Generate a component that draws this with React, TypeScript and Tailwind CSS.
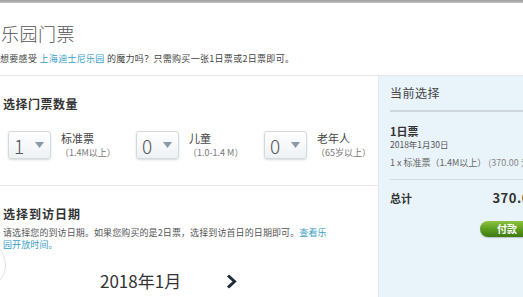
import React from 'react';

const font = { fontFamily: '"Noto Sans CJK SC", "Noto Sans", sans-serif' };

interface TicketSelectProps {
  value: string;
  label: string;
  note: string;
}

const TicketSelect: React.FC<TicketSelectProps> = ({ value, label, note }) => (
  <div className="flex items-start w-[128px] shrink-0">
    <div className="flex items-center justify-between w-[43px] h-[28px] pl-[5px] pr-[6px] rounded-[3px] border border-[#d4d9dd] bg-gradient-to-b from-white to-[#eef2f5] shadow-[0_1px_2px_rgba(0,0,0,0.15)]">
      <span className="text-[19px] font-light leading-none text-[#555]">{value}</span>
      <svg width="9" height="6" viewBox="0 0 9 6">
        <path d="M0 0 H9 L4.5 6 Z" fill="#8d9aa6" />
      </svg>
    </div>
    <div className="ml-[10px] flex flex-col">
      <span className="text-[11px] leading-[14px] text-[#444]">{label}</span>
      <span className="mt-[2px] text-[9px] leading-[11px] text-[#777] -ml-[1px]">{note}</span>
    </div>
  </div>
);

export default function App() {
  return (
    <div style={font} className="relative w-[523px] h-[297px] overflow-hidden bg-white">
      <div className="h-[3px] bg-gradient-to-b from-[#9c9c9c] to-[#c4c4c4]" />

      {/* header */}
      <div className="h-[73px] border-b border-[#e6e8ea] pl-[1px] pt-[18px]">
        <h1 className="text-[18px] leading-[24px] font-light text-[#555] tracking-[0.5px]">乐园门票</h1>
        <p className="mt-[8px] text-[9px] leading-[12px] text-[#444] -ml-[1px] tracking-[0.3px]">
          想要感受 <span className="text-[#3aa0c8]">上海迪士尼乐园</span> 的魔力吗？只需购买一张1日票或2日票即可。
        </p>
      </div>

      <div className="flex">
        {/* left column */}
        <div className="w-[378px] shrink-0">
          <div className="h-[110px] border-b border-[#e8eaec] pt-[19px] pl-[3px]">
            <h2 className="text-[12px] leading-[17px] font-bold text-[#333] tracking-[0.5px]">选择门票数量</h2>
            <div className="mt-[19px] ml-[5px] flex">
              <TicketSelect value="1" label="标准票" note="（1.4M以上）" />
              <TicketSelect value="0" label="儿童" note="（1.0-1.4 M）" />
              <TicketSelect value="0" label="老年人" note="（65岁以上）" />
            </div>
          </div>

          <div className="relative pt-[19px] pl-[3px]">
            <h2 className="text-[12px] leading-[17px] font-bold text-[#333] tracking-[1px]">选择到访日期</h2>
            <p className="mt-[5px] w-[332px] text-[9px] leading-[12px] text-[#555] tracking-[0.1px]">
              请选择您的到访日期。如果您购买的是2日票，选择到访首日的日期即可。<span className="text-[#3aa0c8]">查看乐园开放时间。</span>
            </p>
            <div className="mt-[19px] flex items-center">
              <span className="ml-[97px] text-[17px] leading-[22px] text-[#333]">2018年1月</span>
              <svg className="ml-[45px]" width="11" height="15" viewBox="0 0 11 15">
                <path d="M2 1.5 L8.5 7.5 L2 13.5" fill="none" stroke="#1e2a3a" strokeWidth="3" strokeLinejoin="miter" />
              </svg>
            </div>
            <div className="mt-[6px] flex text-[10px] leading-[12px] text-[#888]">
              <span className="ml-[16px]">日</span>
              <span className="ml-[78px]">一</span>
              <span className="ml-[28px]">二</span>
              <span className="ml-[28px]">三</span>
              <span className="ml-[28px]">四</span>
              <span className="ml-[28px]">五</span>
            </div>
            <div className="absolute left-[-44px] top-[54px] w-[50px] h-[50px] rounded-full border border-[#e2e4e6]" />
          </div>
        </div>

        {/* right panel */}
        <div className="w-[170px] shrink-0 h-[230px] bg-[#e9f3fa] border-l border-[#dde8ef] pl-[11px]">
          <div className="h-[36px] border-b-2 border-[#cfd7dc] pt-[8px]">
            <h3 className="text-[12px] leading-[17px] text-[#444] tracking-[0.5px]">当前选择</h3>
          </div>
          <div className="h-[68px] border-b border-[#d3dadf] pt-[13px]">
            <div className="text-[11px] leading-[13px] font-bold text-[#333]">1日票</div>
            <div className="text-[8.5px] leading-[12px] text-[#555]">2018年1月30日</div>
            <div className="mt-[7px] text-[9px] leading-[12px] text-[#666] whitespace-nowrap">
              1 x 标准票（1.4M以上） <span className="text-[#888]">(370.00 元/门票)</span>
            </div>
          </div>
          <div className="flex items-center justify-between pt-[11px] pr-[10px]">
            <span className="text-[11px] leading-[14px] font-bold text-[#333]">总计</span>
            <span className="text-[13px] leading-[14px] font-bold text-[#333] tracking-[0.5px]">370.00</span>
          </div>
          <div className="mt-[16px] ml-[90px] flex items-center justify-center w-[72px] h-[16px] rounded-full bg-gradient-to-b from-[#8cc43c] via-[#5e9d22] to-[#3e7a12] shadow-[0_1px_1px_rgba(0,0,0,0.2)]">
            <span className="text-[10px] leading-none text-white font-bold -ml-[18px]">付款</span>
          </div>
        </div>
      </div>
    </div>
  );
}
